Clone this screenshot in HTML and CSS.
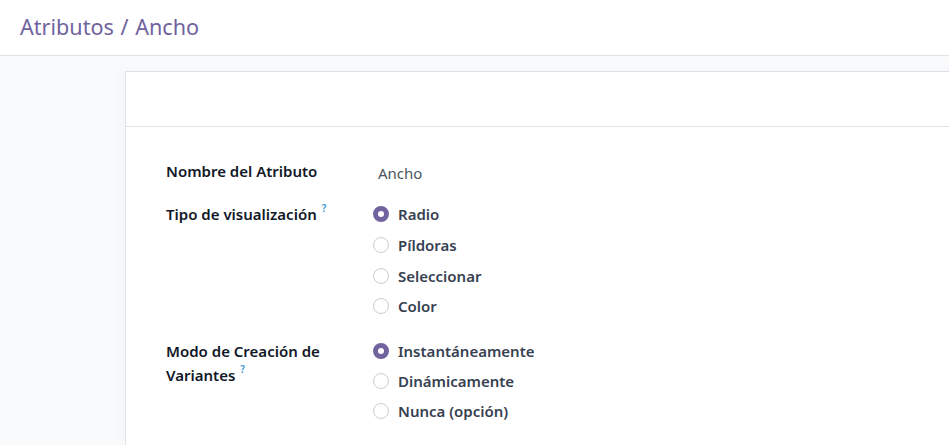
FILE: index.html
```html
<!DOCTYPE html>
<html lang="es">
<head>
<meta charset="utf-8">
<title>Atributos / Ancho</title>
<link rel="stylesheet" href="styles.css">
</head>
<body>
<header class="control-panel">
  <h1 class="breadcrumb">Atributos <span class="sep">/</span> Ancho</h1>
</header>
<main class="content">
  <section class="sheet">
    <div class="sheet-head"></div>
    <div class="form">
      <div class="row row-name">
        <div class="label">Nombre del Atributo</div>
        <div class="value text-value">Ancho</div>
      </div>
      <div class="row row-type">
        <div class="label label-radio">Tipo de visualización<sup class="help">?</sup></div>
        <div class="value radios radios-type">
          <div class="option"><span class="radio checked"></span>Radio</div>
          <div class="option"><span class="radio"></span>Píldoras</div>
          <div class="option"><span class="radio"></span>Seleccionar</div>
          <div class="option"><span class="radio"></span>Color</div>
        </div>
      </div>
      <div class="row row-mode">
        <div class="label label-radio">Modo de Creación de Variantes<sup class="help">?</sup></div>
        <div class="value radios radios-mode">
          <div class="option"><span class="radio checked"></span>Instantáneamente</div>
          <div class="option"><span class="radio"></span>Dinámicamente</div>
          <div class="option"><span class="radio"></span>Nunca (opción)</div>
        </div>
      </div>
    </div>
  </section>
</main>
</body>
</html>
```
FILE: styles.css
```css
html, body {
  margin: 0;
  padding: 0;
  height: 100%;
  overflow: hidden;
}
body {
  font-family: "Noto Sans", "Open Sans", sans-serif;
  background: #ffffff;
  color: #212529;
  display: flex;
  flex-direction: column;
}
.control-panel {
  height: 55px;
  border-bottom: 1px solid #dee2e6;
  display: flex;
  align-items: center;
  padding-left: 20px;
  flex-shrink: 0;
}
.breadcrumb {
  margin: 0;
  font-size: 21.6px;
  font-weight: 400;
  color: #71639e;
  line-height: 1;
  padding-bottom: 1px;
}
.sep {
  margin: 0 1px;
}
.content {
  flex: 1;
  background: #f9fafb;
  padding: 15px 0 0 125px;
}
.sheet {
  background: #fff;
  border-left: 1px solid #dee2e6;
  border-top: 1px solid #dee2e6;
  margin-right: -20px;
  height: 100%;
  box-shadow: -6px 0 12px rgba(0, 0, 0, 0.02);
}
.sheet-head {
  height: 54px;
  border-bottom: 1px solid #dee2e6;
}
.form {
  padding: 32px 0 0 40px;
}
.row {
  display: grid;
  grid-template-columns: 207px 1fr;
}
.label {
  font-size: 15px;
  font-weight: 600;
  color: #111827;
  line-height: 24px;
}
.help {
  display: inline-block;
  font-size: 10px;
  color: #3c9bd0;
  margin-left: 5px;
  vertical-align: top;
  line-height: 10px;
  margin-top: 1px;
}
.text-value {
  font-size: 15px;
  color: #4b5563;
  line-height: 24px;
  padding: 2px 0 0 5px;
}
.row-name {
  margin-bottom: 14px;
}
.row-type {
  margin-bottom: 14px;
}
.label-radio {
  padding-top: 3px;
}
.radios {
  display: flex;
  flex-direction: column;
}
.option {
  display: flex;
  align-items: center;
  height: 30.67px;
  font-size: 15px;
  font-weight: 600;
  color: #374151;
}
.radios-mode .option {
  height: 30px;
}
.radio {
  width: 16px;
  height: 16px;
  box-sizing: border-box;
  border-radius: 50%;
  border: 1px solid #c8ccd1;
  background: #fff;
  margin-right: 9px;
  flex-shrink: 0;
}
.radio.checked {
  border: 5px solid #71639e;
  background: #fff;
}
```
